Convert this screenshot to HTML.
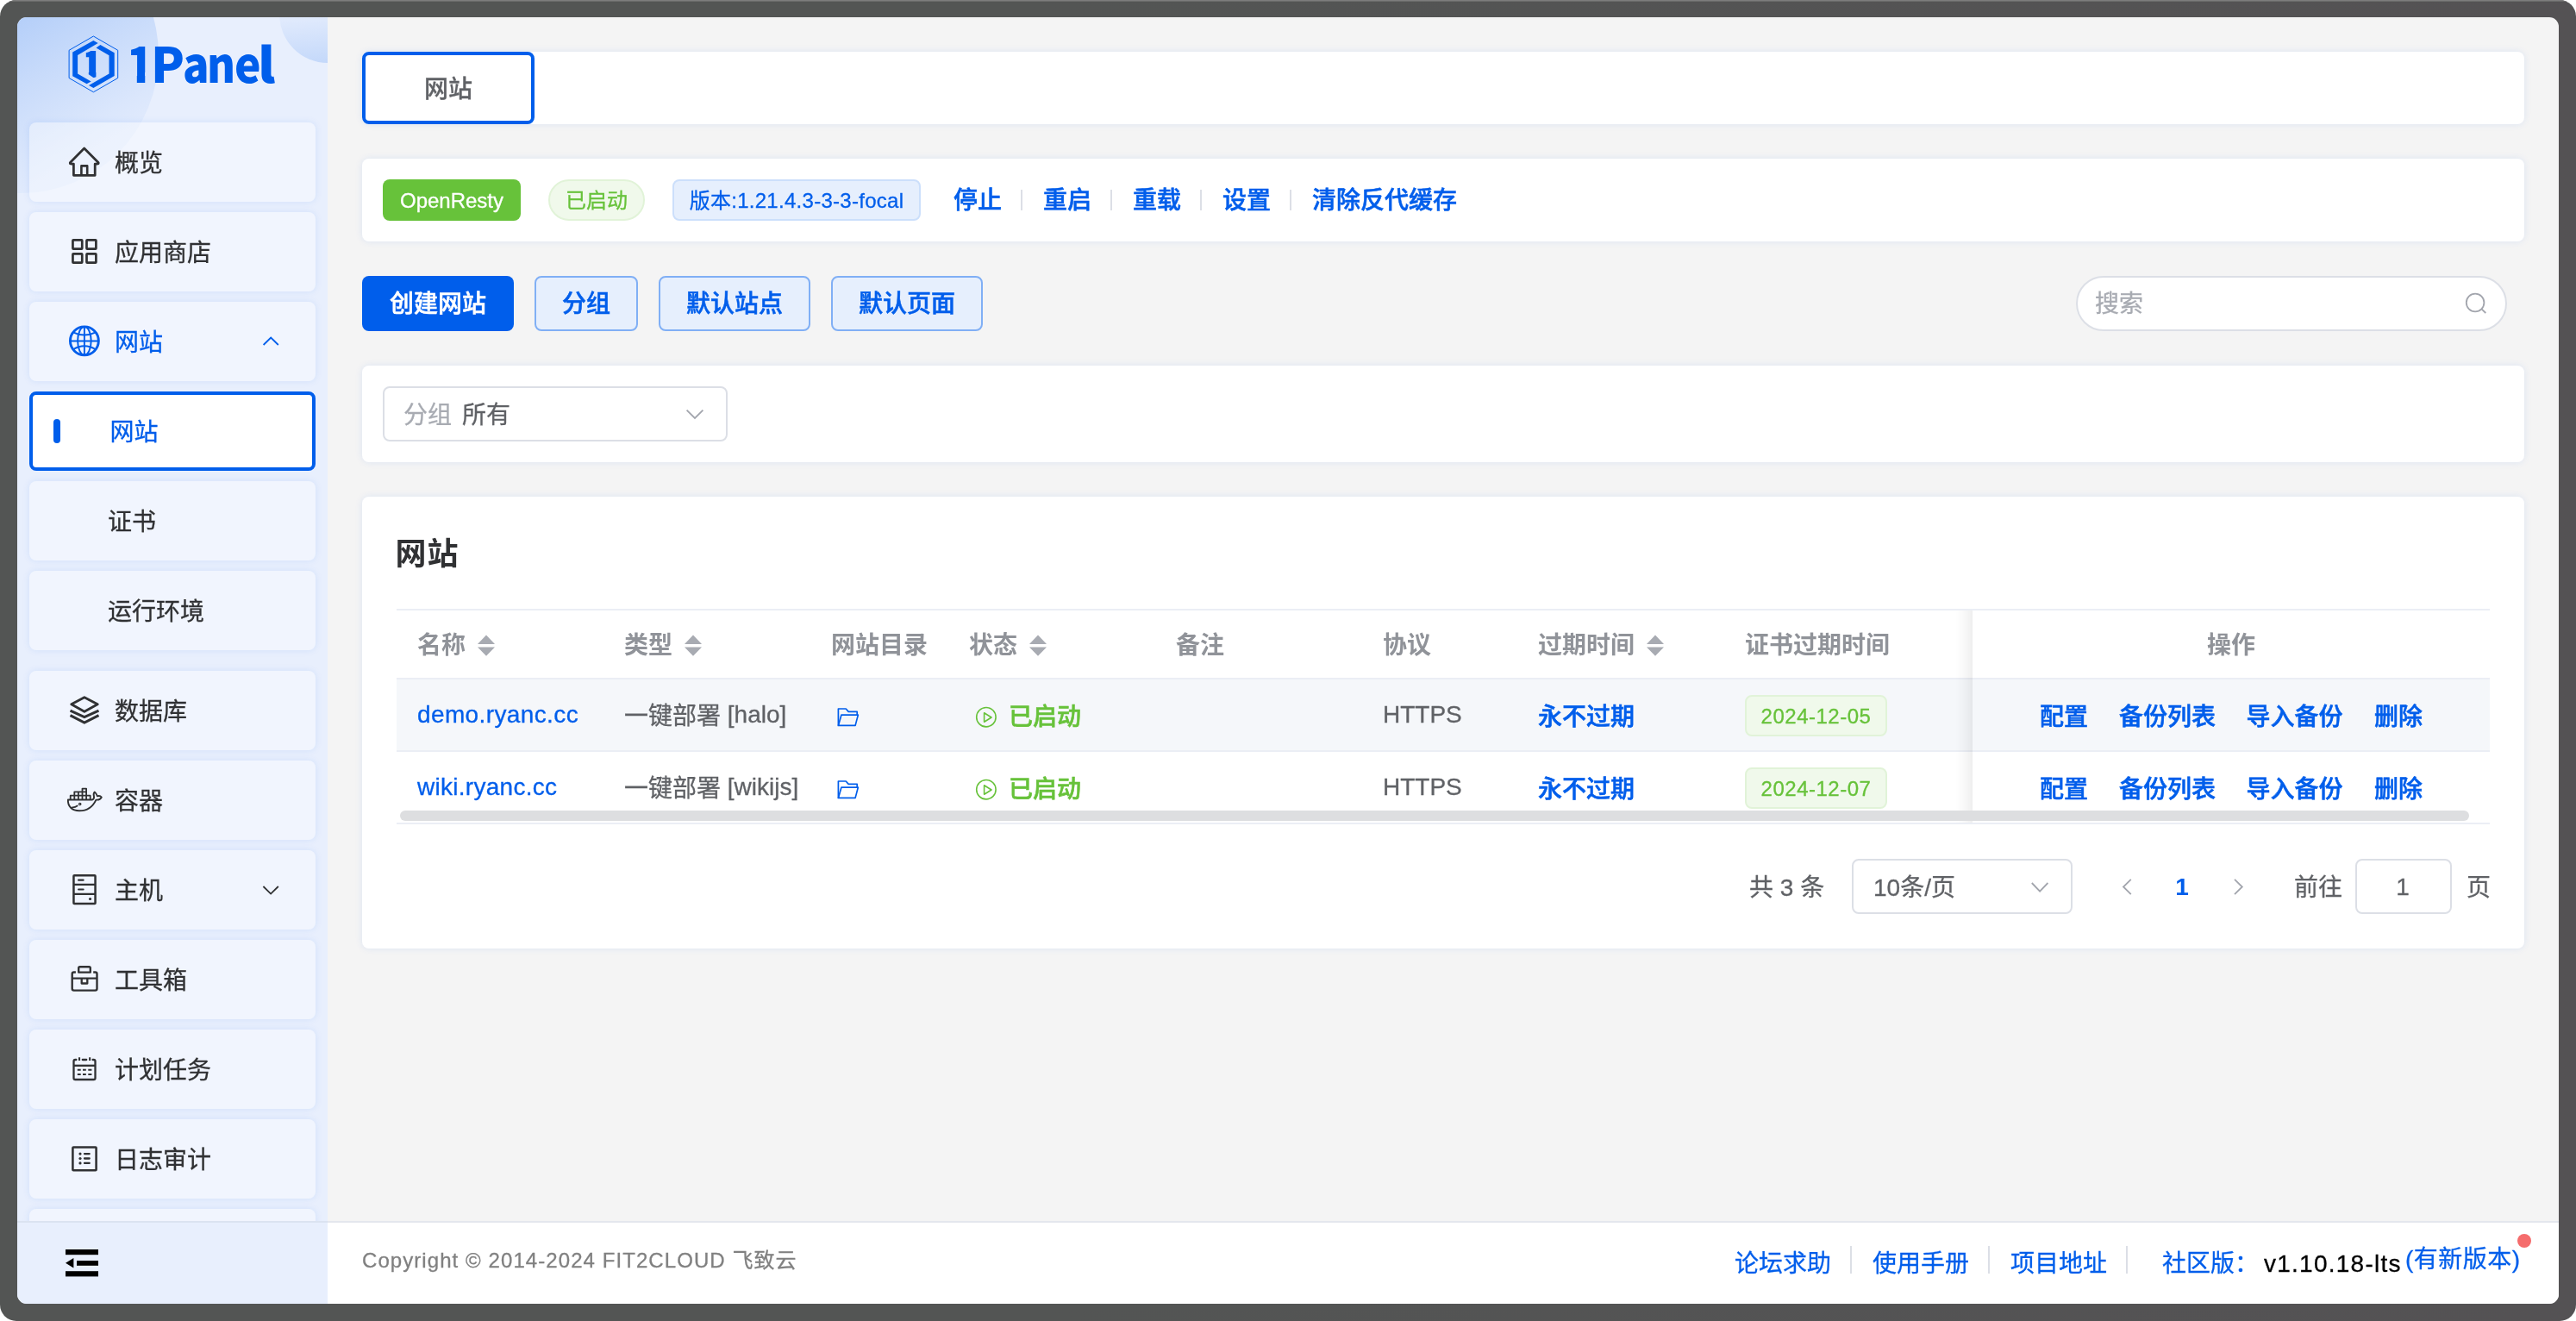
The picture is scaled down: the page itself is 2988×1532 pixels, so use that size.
<!DOCTYPE html>
<html lang="zh-CN">
<head>
<meta charset="utf-8">
<title>1Panel</title>
<style>
*{box-sizing:border-box;margin:0;padding:0}
html,body{width:2988px;height:1532px;overflow:hidden;background:#fff}
body{position:relative;font-family:"Liberation Sans","Noto Sans CJK SC",sans-serif;font-size:28px;color:#606266;-webkit-font-smoothing:antialiased;-webkit-text-stroke:.3px}
.abs{position:absolute}
#frame{position:absolute;left:0;top:0;width:2988px;height:1532px;border-radius:19px;background:linear-gradient(90deg,#535554 0%,#535554 40%,#545254 100%);overflow:hidden}
#frame:before{content:"";position:absolute;left:0;top:0;width:100%;height:2px;background:linear-gradient(180deg,#7d7d7d 0,#7d7d7d 45%,#5c5d5c 100%)}
#app{position:absolute;left:20px;top:20px;width:2948px;height:1492px;border-radius:11px;overflow:hidden;background:#f4f4f4}
/* everything inside #app is positioned in page coordinates via this shifted layer */
#page{position:absolute;left:-20px;top:-20px;width:2988px;height:1532px;will-change:transform}
/* ---------- sidebar ---------- */
#side{position:absolute;left:20px;top:20px;width:360px;height:1492px;background:#e8effd;overflow:hidden}
#side .blob1{position:absolute;left:-156px;top:-116px;width:320px;height:320px;border-radius:50%;background:linear-gradient(150deg,rgba(0,94,235,.443) 0%,rgba(0,94,235,.225) 40.8%,rgba(0,94,235,.14) 56.7%,rgba(0,94,235,.06) 74.9%,rgba(0,94,235,.035) 81.3%,rgba(0,94,235,.025) 100%)}
#side .blob2{position:absolute;left:303.5px;top:-60.5px;width:113px;height:113px;border-radius:50%;background:linear-gradient(175deg,rgba(0,94,235,.035) 52%,rgba(0,94,235,.17) 100%)}
.mi{position:absolute;left:34px;width:332px;height:92px;border-radius:8px;background:rgba(255,255,255,.38);box-shadow:0 0 8px rgba(0,94,235,.1)}
.mi .t{position:absolute;left:99px;top:2px;height:92px;line-height:92px;font-size:28px;color:#303133;white-space:nowrap}
.mi.sub .t{left:91px}
.mi.act{background:#fff;border:4px solid #005eeb;box-shadow:none}
.mi.act .t{left:89.5px;top:-2px;color:#005eeb}
.mi.act:before{content:"";position:absolute;left:24px;top:28px;width:8px;height:28px;border-radius:4px;background:#005eeb}
.mi svg{position:absolute;left:0;top:0;overflow:visible}
.blue .t{color:#005eeb}
#sidefoot{position:absolute;left:20px;top:1416px;width:360px;height:96px;background:#e8effd;border-top:2px solid #dbe3f1}
/* ---------- main ---------- */
.card{position:absolute;left:420px;width:2508px;background:#fff;border-radius:8px;box-shadow:0 0 8px rgba(0,94,235,.1)}
.lk{color:#005eeb;font-weight:700;white-space:nowrap}
.t28{font-size:28px;white-space:nowrap;position:absolute}

.sl{top:209px;height:48px;line-height:48px}
.dv{top:220px;width:2px;height:24px;background:#dcdfe6}
.btn{top:320px;height:64px;line-height:65px;border-radius:8px;text-align:center;font-size:28px;font-weight:700;white-space:nowrap}
.btn.pri{background:#005eeb;color:#fff}
.btn.pl{background:#e6effd;border:2px solid #80aff5;color:#005eeb;line-height:61px}

.hl{left:460px;width:2428px;height:2px;background:#ebeef5}
.th{top:710px;height:78px;line-height:78px;color:#909399;font-weight:700}
.rc{height:82px;line-height:82px}
.rc.lk{margin-top:3px}
.rc .cj{position:relative;top:2px}
.ls3{letter-spacing:.33px}
.pg{top:997.5px;height:64px;line-height:64px;color:#606266}
.ft{top:1441.5px;height:48px;line-height:48px}
.fd{top:1445px;width:2px;height:32px;background:#dcdfe6}
.lg{position:absolute;top:0;display:block;transform-origin:0 50%}
.th,#ttl,.lg,.nb{-webkit-text-stroke:0}
.lk,.btn{font-weight:500!important;-webkit-text-stroke:.55px}
</style>
</head>
<body>
<div id="frame"></div>
<div id="app"><div id="page">

<!-- ================= SIDEBAR ================= -->
<div id="side"><div class="blob1"></div><div class="blob2"></div></div>

<div class="mi" style="top:142px"><span class="t">概览</span></div>
<div class="mi" style="top:246px"><span class="t">应用商店</span></div>
<div class="mi blue" style="top:350px"><span class="t">网站</span></div>
<div class="mi act" style="top:454px"><span class="t">网站</span></div>
<div class="mi sub" style="top:558px"><span class="t">证书</span></div>
<div class="mi sub" style="top:662px"><span class="t">运行环境</span></div>
<div class="mi" style="top:778px"><span class="t">数据库</span></div>
<div class="mi" style="top:882px"><span class="t">容器</span></div>
<div class="mi" style="top:986px"><span class="t">主机</span></div>
<div class="mi" style="top:1090px"><span class="t">工具箱</span></div>
<div class="mi" style="top:1194px"><span class="t">计划任务</span></div>
<div class="mi" style="top:1298px"><span class="t">日志审计</span></div>
<div class="mi" style="top:1402px"></div>

<!-- logo -->
<div class="abs" id="logotxt" style="left:0;top:27px;width:400px;height:90px;line-height:90px;font-family:'Noto Sans CJK SC','Liberation Sans',sans-serif;font-size:56px;font-weight:900;color:#005eeb;white-space:nowrap"><span class="lg" style="left:147.3px;transform:scaleX(.916);clip-path:polygon(0 0,100% 0,100% 57px,23.2px 57px,23.2px 100%,12.9px 100%,12.9px 57px,0 57px)">1</span><span class="lg" style="left:174.5px;transform:scaleX(1.016)">P</span><span class="lg" style="left:212.2px;transform:scaleX(.904)">a</span><span class="lg" style="left:239.6px;transform:scaleX(.897)">n</span><span class="lg" style="left:271.8px;transform:scaleX(.917)">e</span><span class="lg" style="left:298.5px;transform:scaleX(1.1)">l</span></div>

<svg class="abs" style="left:0;top:0;pointer-events:none" width="400" height="1532" viewBox="0 0 400 1532" fill="none">
  <!-- logo hexagon -->
  <polygon points="108.4,42 136.7,58.3 136.7,90.5 108.4,106.8 80.1,90.5 80.1,58.3" stroke="#005eeb" stroke-width="1" fill="none"/>
  <g fill="#005eeb" stroke="none">
    <polygon points="108.4,46.9 84.2,60.6 84.2,88.2 100.6,97.3 105.7,94.6 90.1,85.6 90.1,64.1 113.7,50.1"/>
    <polygon points="116.4,52.1 132.7,61.3 132.7,88.1 108.4,102.1 103,98.9 126.5,85.6 126.5,64.2 111.5,55.4"/>
  </g>
  <clipPath id="c1"><polygon points="99.8,56 111.4,56 111.4,89.2 108.6,90.3 102.8,86.2 102.8,70 99.8,70"/></clipPath>
  <g clip-path="url(#c1)"><text x="0" y="0" style="font-family:'Noto Sans CJK SC','Liberation Sans',sans-serif;font-weight:900;font-size:41px" fill="#005eeb" transform="translate(92.6 90.2) scale(1.11 1)">1</text></g>

  <!-- home -->
  <g stroke="#303133" stroke-width="2.75" fill="none" stroke-linejoin="round">
    <path d="M85.4,203.3 V190 H82.4 Q80.5,189.7 81.7,188.2 L97.7,172 L113.8,188.2 Q115,189.7 113.1,190 H110.2 V203.3 Z"/>
    <path d="M94.4,203.3 V192.4 H101.2 V203.3" stroke-width="2.6"/>
  </g>
  <!-- grid -->
  <g stroke="#303133" stroke-width="2.7" fill="none" stroke-linejoin="round">
    <rect x="84.45" y="278.45" width="10.8" height="10.2" rx=".6"/>
    <rect x="100.5" y="278.45" width="10.9" height="10.2" rx=".6"/>
    <rect x="84.45" y="294.3" width="10.8" height="10.4" rx=".6"/>
    <rect x="100.5" y="294.3" width="10.9" height="10.4" rx=".6"/>
  </g>
  <!-- globe -->
  <g stroke="#005eeb" fill="none">
    <circle cx="97.9" cy="395.3" r="16.45" stroke-width="2.9"/>
    <path d="M97.9,379 V411.6 M81.6,395.5 H114.2" stroke-width="1.95"/>
    <ellipse cx="97.9" cy="395.3" rx="7.8" ry="16.3" stroke-width="1.95"/>
    <path d="M84.8,385.3 Q97.9,391.9 111,385.3 M84.8,405.3 Q97.9,397.3 111,405.3" stroke-width="1.95"/>
  </g>
  <path d="M305.6,400 L314.2,391.6 L322.8,400" stroke="#005eeb" stroke-width="1.8" fill="none"/>
  <!-- layers -->
  <g stroke="#303133" fill="none">
    <path d="M97.9,808.8 L113.2,816.8 L97.9,825.2 L82.8,816.8 Z" stroke-width="2.9" stroke-linejoin="round"/>
    <path d="M81.5,824.1 L97.9,831.6 L114.5,824.1" stroke-width="3.1" stroke-linejoin="miter"/>
    <path d="M81.5,829.7 L97.9,838.1 L114.5,829.7" stroke-width="3.1" stroke-linejoin="miter"/>
  </g>
  <!-- docker whale -->
  <g stroke="#303133" stroke-width="1.9" fill="none" stroke-linejoin="round" stroke-linecap="round">
    <path d="M78.9,927.5 H107.2 C108.9,926.7 109.4,925.3 108.9,923.3 C108.3,921.3 108.7,919.6 109.9,918.6 C111.5,920 112.5,921.6 112.9,923.4 C114.7,922.8 116.7,923.2 117.8,924.5 C116.8,926.7 114.4,927.8 111.4,927.6 C107.4,936.2 101,940.3 92,940.3 C83.6,940.3 78.4,935.2 78.9,927.5 Z"/>
    <path d="M81.7,927.3 V922.7 H104.7 V927.3 M86.3,927.3 V918.3 H100.1 V927.3 M95.5,927.3 V914.6 H100.1 V918.3 M90.9,918.3 V927.3 M86.3,922.7 H100.1 M95.5,918.3 H100.1" stroke-width="1.8" stroke-linecap="butt"/>
    <path d="M83.8,936.3 Q87.4,936.4 89.7,934.5" stroke-width="1.7"/>
  </g>
  <circle cx="92.7" cy="932.5" r="1.15" fill="none" stroke="#303133" stroke-width="1.3"/>
  <!-- host -->
  <g stroke="#303133" stroke-width="2.5" fill="none" stroke-linejoin="round">
    <rect x="85.45" y="1015.25" width="25.1" height="32.7" rx=".8"/>
    <path d="M85.45,1025.9 H110.55 M85.45,1036.9 H110.55" stroke-width="2.3"/>
    <path d="M91.1,1020.65 H96.6 M91.1,1031.5 H96.6" stroke-width="2.2" stroke-linecap="round"/>
  </g>
  <circle cx="104.55" cy="1042.5" r="1.6" fill="#303133"/>
  <path d="M305.4,1028 L314.1,1036.6 L322.8,1028" stroke="#303133" stroke-width="1.8" fill="none"/>
  <!-- toolbox -->
  <g stroke="#303133" stroke-width="2.4" fill="none" stroke-linejoin="round">
    <path d="M87.9,1127.5 H85.7 Q83.7,1127.5 83.7,1129.5 V1146.6 Q83.7,1148.6 85.7,1148.6 H110.5 Q112.5,1148.6 112.5,1146.6 V1129.5 Q112.5,1127.5 110.5,1127.5 H108.2"/>
    <path d="M91.2,1127.6 V1122.8 Q91.2,1121.3 92.7,1121.3 H103.3 Q104.8,1121.3 104.8,1122.8 V1127.6 Z"/>
    <path d="M83.7,1134.6 H112.5" stroke-width="2.2"/>
    <path d="M94.7,1134.6 V1140.5 H101.3 V1134.6" stroke-width="2.3"/>
  </g>
  <!-- calendar -->
  <g stroke="#303133" stroke-width="2.3" fill="none" stroke-linecap="round">
    <path d="M88.4,1229 H87.3 Q85.5,1229 85.5,1230.8 V1250.2 Q85.5,1252 87.3,1252 H108.7 Q110.5,1252 110.5,1250.2 V1230.8 Q110.5,1229 108.7,1229 H107.6 M95.8,1229 H100.2"/>
    <path d="M85.5,1235.8 H110.5" stroke-linecap="butt"/>
    <path d="M92.05,1226.2 V1230 M104.15,1226.2 V1230" stroke-width="2.1" stroke-linecap="butt"/>
    <path d="M89.8,1240.75 H93.7 M96,1240.75 H99.8 M102.3,1240.75 H106.4 M89.8,1245.95 H93.7 M96,1245.95 H99.8 M102.3,1245.95 H106.4" stroke-width="2.1" stroke-linecap="butt"/>
  </g>
  <!-- log -->
  <g stroke="#303133" fill="none" stroke-linejoin="round">
    <rect x="84.4" y="1330.4" width="27.2" height="26.8" rx=".8" stroke-width="2.55"/>
    <path d="M98,1338.1 H103.7 M98,1343.5 H103.7 M98,1348.9 H103.7" stroke-width="2.3" stroke-linecap="round"/>
  </g>
  <g fill="#303133"><circle cx="93" cy="1338.1" r="1.6"/><circle cx="93" cy="1343.5" r="1.6"/><circle cx="93" cy="1348.9" r="1.6"/></g>
</svg>

<div id="sidefoot"></div>

<svg class="abs" style="left:0;top:1420px;pointer-events:none" width="400" height="100" viewBox="0 1420 400 100">
  <g fill="#000">
    <rect x="76" y="1449" width="38" height="6.2"/>
    <rect x="89" y="1462" width="25" height="5.8"/>
    <rect x="76" y="1474.2" width="38" height="6.2"/>
    <path d="M76,1464.8 L85.4,1459 V1470.6 Z"/>
  </g>
</svg>


<!-- ================= MAIN ================= -->

<!-- tab bar -->
<div class="card" style="top:60px;height:84px"></div>
<div class="abs" style="left:420px;top:60px;width:200px;height:84px;border:4px solid #005eeb;border-radius:8px;background:#fff"></div>
<div class="t28" id="tabtxt" style="left:420px;top:62px;font-weight:500;width:200px;height:84px;line-height:84px;text-align:center;color:#606266">网站</div>

<!-- status card -->
<div class="card" style="top:184px;height:96px"></div>
<div class="abs" style="left:444px;top:208px;width:160px;height:48px;line-height:50px;border-radius:8px;background:#67c23a;color:#fff;font-size:24px;text-align:center">OpenResty</div>
<div class="abs" style="left:636px;top:208px;width:112px;height:48px;line-height:46px;border-radius:24px;background:#f0f9eb;border:2px solid #e1f3d8;color:#67c23a;font-size:24px;text-align:center">已启动</div>
<div class="abs" style="left:780px;top:208px;width:288px;height:48px;line-height:46px;letter-spacing:.28px;border-radius:8px;background:#e6effd;border:2px solid #ccdffb;color:#005eeb;font-size:24px;text-align:center;white-space:nowrap">版本:1.21.4.3-3-3-focal</div>
<div class="t28 lk sl" style="left:1106px">停止</div>
<div class="t28 lk sl" style="left:1210px">重启</div>
<div class="t28 lk sl" style="left:1314px">重载</div>
<div class="t28 lk sl" style="left:1418px">设置</div>
<div class="t28 lk sl" style="left:1522px">清除反代缓存</div>
<div class="abs dv" style="left:1184px"></div><div class="abs dv" style="left:1288px"></div><div class="abs dv" style="left:1392px"></div><div class="abs dv" style="left:1496px"></div>

<!-- buttons -->
<div class="abs btn pri" style="left:420px;width:176px">创建网站</div>
<div class="abs btn pl" style="left:620px;width:120px">分组</div>
<div class="abs btn pl" style="left:764px;width:176px">默认站点</div>
<div class="abs btn pl" style="left:964px;width:176px">默认页面</div>
<div class="abs" style="left:2408px;top:320px;width:500px;height:64px;border-radius:32px;border:2px solid #dcdfe6;background:#fff"></div>
<div class="t28" style="left:2430px;top:321px;height:64px;line-height:64px;color:#a8abb2">搜索</div>

<!-- filter card -->
<div class="card" style="top:424px;height:112px"></div>
<div class="abs" style="left:444px;top:448px;width:400px;height:64px;border-radius:8px;border:2px solid #dcdfe6;background:#fff"></div>
<div class="t28" style="left:468px;top:450px;height:64px;line-height:64px;color:#a8abb2">分组</div>
<div class="t28" style="left:536px;top:450px;height:64px;line-height:64px;color:#606266">所有</div>

<!-- table card -->
<div class="card" style="top:576px;height:524px"></div>
<div class="abs" id="ttl" style="left:458.5px;top:617px;letter-spacing:1px;height:52px;line-height:52px;font-size:36px;font-weight:700;color:#303133;white-space:nowrap">网站</div>

<div class="abs hl" style="top:706px"></div>
<div class="t28 th" style="left:484px">名称</div>
<div class="t28 th" style="left:724px">类型</div>
<div class="t28 th" style="left:964px">网站目录</div>
<div class="t28 th" style="left:1124px">状态</div>
<div class="t28 th" style="left:1364px">备注</div>
<div class="t28 th" style="left:1604px">协议</div>
<div class="t28 th" style="left:1784px">过期时间</div>
<div class="t28 th" style="left:2024px">证书过期时间</div>
<div class="abs hl" style="top:786px"></div>
<div class="abs" style="left:460px;top:788px;width:2428px;height:82px;background:#f5f7fa"></div>
<div class="t28 rc" style="left:484px;top:788px;color:#005eeb;letter-spacing:.38px">demo.ryanc.cc</div>
<div class="t28 rc" style="left:724px;top:788px"><span class="cj">一键部署</span> [halo]</div>
<div class="t28 rc lk" style="left:1170px;top:788px;color:#67c23a">已启动</div>
<div class="t28 rc" style="left:1604px;top:788px">HTTPS</div>
<div class="t28 rc lk" style="left:1784px;top:788px">永不过期</div>
<div class="abs" style="left:2024px;top:806px;width:165px;height:48px;line-height:45px;letter-spacing:.5px;border-radius:8px;background:#f0f9eb;border:2px solid #e1f3d8;color:#67c23a;font-size:24px;text-align:center;white-space:nowrap">2024-12-05</div>

<div class="abs hl" style="top:870px"></div>
<div class="t28 rc" style="left:484px;top:872px;color:#005eeb;letter-spacing:.28px">wiki.ryanc.cc</div>
<div class="t28 rc" style="left:724px;top:872px"><span class="cj">一键部署</span> [wikijs]</div>
<div class="t28 rc lk" style="left:1170px;top:872px;color:#67c23a">已启动</div>
<div class="t28 rc" style="left:1604px;top:872px">HTTPS</div>
<div class="t28 rc lk" style="left:1784px;top:872px">永不过期</div>
<div class="abs" style="left:2024px;top:890px;width:165px;height:48px;line-height:45px;letter-spacing:.5px;border-radius:8px;background:#f0f9eb;border:2px solid #e1f3d8;color:#67c23a;font-size:24px;text-align:center;white-space:nowrap">2024-12-07</div>

<!-- fixed column -->
<div class="abs" style="left:2268px;top:708px;width:20px;height:246px;background:linear-gradient(90deg,rgba(0,0,0,0),rgba(0,0,0,.02) 45%,rgba(0,0,0,.062))"></div>
<div class="abs" style="left:2288px;top:708px;width:600px;height:78px;background:#fff"></div>
<div class="t28 th" style="left:2288px;width:600px;text-align:center">操作</div>
<div class="abs" style="left:2288px;top:788px;width:600px;height:82px;background:#f5f7fa"></div>
<div class="t28 rc lk" style="left:2366px;top:788px">配置</div>
<div class="t28 rc lk" style="left:2458px;top:788px">备份列表</div>
<div class="t28 rc lk" style="left:2605.5px;top:788px">导入备份</div>
<div class="t28 rc lk" style="left:2754px;top:788px">删除</div>
<div class="abs" style="left:2288px;top:872px;width:600px;height:82px;background:#fff"></div>
<div class="t28 rc lk" style="left:2366px;top:872px">配置</div>
<div class="t28 rc lk" style="left:2458px;top:872px">备份列表</div>
<div class="t28 rc lk" style="left:2605.5px;top:872px">导入备份</div>
<div class="t28 rc lk" style="left:2754px;top:872px">删除</div>

<div class="abs hl" style="top:786px;left:2288px;width:600px"></div>
<div class="abs hl" style="top:870px;left:2288px;width:600px"></div>
<div class="abs hl" style="top:954px"></div>
<div class="abs" style="left:464px;top:940px;width:2400px;height:12px;border-radius:6px;background:#dddee0"></div>

<svg class="abs" style="left:0;top:0;pointer-events:none" width="2988" height="1200" viewBox="0 0 2988 1200" fill="none">
  <!-- search icon -->
  <g stroke="#a2a5ad" stroke-width="1.8" fill="none"><circle cx="2871.1" cy="351" r="10.3"/><path d="M2878.5,358.3 L2883.3,363"/></g>
  <!-- select arrows -->
  <path d="M796.6,475.6 L806,485 L815.4,475.6" stroke="#a2a5ad" stroke-width="1.8"/>
  <!-- sort carets -->
  <g fill="#a8abb2">
    <path d="M554,747 L564,736.6 L574,747 Z M554,750.4 L564,760.8 L574,750.4 Z"/>
    <path d="M794,747 L804,736.6 L814,747 Z M794,750.4 L804,760.8 L814,750.4 Z"/>
    <path d="M1194,747 L1204,736.6 L1214,747 Z M1194,750.4 L1204,760.8 L1214,750.4 Z"/>
    <path d="M1910,747 L1920,736.6 L1930,747 Z M1910,750.4 L1920,760.8 L1930,750.4 Z"/>
  </g>
  <!-- folder icons -->
  <g id="fold" stroke="#005eeb" stroke-width="1.7" fill="none" stroke-linejoin="round">
    <path d="M972.4,841.4 V822 H981.2 L984.2,825.4 H994.2 V829"/>
    <path d="M972.4,841.4 L975.9,829.2 H995.3 L992.1,841.4 Z"/>
  </g>
  <use href="#fold" y="84"/>
  <!-- play icons -->
  <g id="play" stroke="#67c23a" stroke-width="1.6" fill="none" stroke-linejoin="round">
    <circle cx="1143.9" cy="831.7" r="11.2"/>
    <path d="M1141.6,826.8 L1150,832 L1141.6,837.2 Z"/>
  </g>
  <use href="#play" y="84"/>
</svg>

<!-- pagination -->
<div class="t28 pg" style="left:2029px">共 3 条</div>
<div class="abs" style="left:2148px;top:996px;width:256px;height:64px;border-radius:8px;border:2px solid #dcdfe6;background:#fff"></div>
<div class="t28 pg" style="left:2173px">10条/页</div>
<div class="t28 pg" style="left:2500px;top:996.5px;width:62px;text-align:center;color:#005eeb;font-weight:700;-webkit-text-stroke:0">1</div>
<div class="t28 pg" style="left:2661px">前往</div>
<div class="abs" style="left:2732px;top:996px;width:112px;height:64px;border-radius:8px;border:2px solid #dcdfe6;background:#fff"></div>
<div class="t28 pg" style="left:2731px;top:996.5px;width:112px;text-align:center">1</div>
<div class="t28 pg" style="left:2861px">页</div>
<svg class="abs" style="left:2300px;top:990px;pointer-events:none" width="400" height="80" viewBox="2300 990 400 80" fill="none" stroke="#a2a5ad" stroke-width="1.8">
  <path d="M2356.8,1024 L2366.1,1033.6 L2375.4,1024"/>
  <path d="M2471.8,1019.8 L2463,1028.5 L2471.8,1037.2"/>
  <path d="M2592,1019.8 L2600.8,1028.5 L2592,1037.2"/>
</svg>


<!-- footer -->
<div class="abs" style="left:380px;top:1416px;width:2588px;height:96px;background:#fff;border-top:2px solid #e4e7ed"></div>

<div class="abs" id="copy" style="left:420px;top:1437.5px;height:48px;line-height:48px;font-size:24px;letter-spacing:1.07px;color:#808080;white-space:nowrap">Copyright © 2014-2024 FIT2CLOUD 飞致云</div>
<div class="t28 ft" style="left:2012px;color:#005eeb">论坛求助</div>
<div class="t28 ft" style="left:2172px;color:#005eeb">使用手册</div>
<div class="t28 ft" style="left:2332px;color:#005eeb">项目地址</div>
<div class="abs fd" style="left:2146px"></div><div class="abs fd" style="left:2306px"></div><div class="abs fd" style="left:2466px"></div>
<div class="t28 ft" style="left:2508px;color:#005eeb">社区版：</div>
<div class="t28 ft" id="ver" style="left:2626px;top:1442px;color:#000;letter-spacing:1.25px">v1.10.18-lts</div>
<div class="t28 ft" id="newv" style="left:2790px;color:#005eeb;top:1437px;letter-spacing:.5px">(有新版本)</div>
<div class="abs" style="left:2920px;top:1431px;width:16px;height:16px;border-radius:50%;background:#f56c6c"></div>



</div></div>
</body>
</html>
